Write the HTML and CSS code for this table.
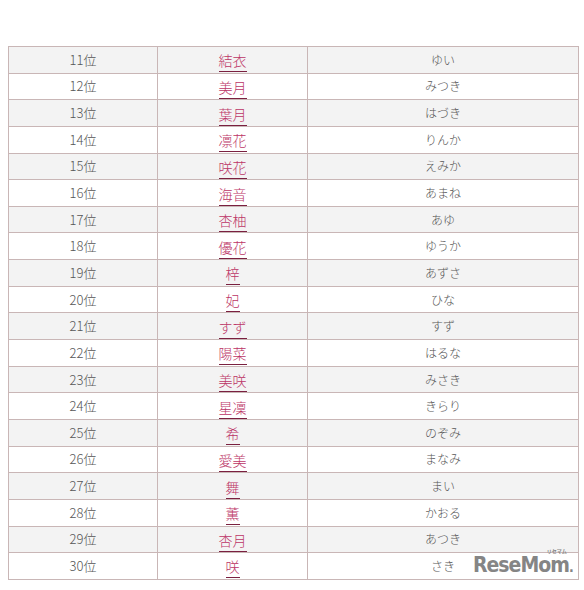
FILE: index.html
```html
<!DOCTYPE html>
<html lang="ja">
<head>
<meta charset="utf-8">
<link rel="stylesheet" href="styles.css">
</head>
<body>
<div class="wrap">
<table class="rank">
<colgroup><col class="c1"><col class="c2"><col class="c3"></colgroup>
<tbody>
<tr><td>11位</td><td><a>結衣</a></td><td>ゆい</td></tr>
<tr><td>12位</td><td><a>美月</a></td><td>みつき</td></tr>
<tr><td>13位</td><td><a>葉月</a></td><td>はづき</td></tr>
<tr><td>14位</td><td><a>凛花</a></td><td>りんか</td></tr>
<tr><td>15位</td><td><a>咲花</a></td><td>えみか</td></tr>
<tr><td>16位</td><td><a>海音</a></td><td>あまね</td></tr>
<tr><td>17位</td><td><a>杏柚</a></td><td>あゆ</td></tr>
<tr><td>18位</td><td><a>優花</a></td><td>ゆうか</td></tr>
<tr><td>19位</td><td><a>梓</a></td><td>あずさ</td></tr>
<tr><td>20位</td><td><a>妃</a></td><td>ひな</td></tr>
<tr><td>21位</td><td><a>すず</a></td><td>すず</td></tr>
<tr><td>22位</td><td><a>陽菜</a></td><td>はるな</td></tr>
<tr><td>23位</td><td><a>美咲</a></td><td>みさき</td></tr>
<tr><td>24位</td><td><a>星凜</a></td><td>きらり</td></tr>
<tr><td>25位</td><td><a>希</a></td><td>のぞみ</td></tr>
<tr><td>26位</td><td><a>愛美</a></td><td>まなみ</td></tr>
<tr><td>27位</td><td><a>舞</a></td><td>まい</td></tr>
<tr><td>28位</td><td><a>薫</a></td><td>かおる</td></tr>
<tr><td>29位</td><td><a>杏月</a></td><td>あつき</td></tr>
<tr><td>30位</td><td><a>咲</a></td><td>さき</td></tr>
</tbody>
</table>
<div class="logo"><span class="ruby">リセマム</span>ReseMom<span class="dot">.</span></div>
</div>
</body>
</html>
```
FILE: styles.css
```css
html, body { margin: 0; padding: 0; background: #fff; }
body { font-family: "Noto Sans CJK JP", "Noto Sans", sans-serif; color: #555; }
.wrap { position: relative; padding: 46px 7px 0 8px; }
.rank { width: 570px; border-collapse: collapse; table-layout: fixed; }
.c1 { width: 149px; }
.c2 { width: 150px; }
.c3 { width: 271px; }
.rank td {
  border: 1px solid #c9b6b6;
  height: 25.65px;
  padding: 0;
  text-align: center;
  font-size: 13px;
  font-weight: 300;
  line-height: 18px;
  vertical-align: middle;
}
.rank td:nth-child(3) { font-size: 12px; }
.rank tr:nth-child(odd) td { background: #f3f3f3; }
.rank tr:nth-child(even) td { background: #fff; }
.rank a {
  color: #bc3566;
  font-size: 14px;
  display: inline-block;
  line-height: 18px;
  padding-bottom: 2px;
  border-bottom: 1px solid #7a2040;
  position: relative;
  top: 2px;
}
.logo {
  position: absolute;
  left: 473px;
  top: 554px;
  font-family: "DejaVu Sans", sans-serif;
  font-stretch: condensed;
  font-weight: bold;
  font-size: 21px;
  letter-spacing: -1px;
  color: #858585;
  line-height: 22px;
}
.logo .ruby {
  position: absolute;
  right: 6px;
  top: -6px;
  font-size: 5px;
  letter-spacing: 0;
  font-stretch: normal;
  font-family: "Noto Sans CJK JP", sans-serif;
  line-height: 6px;
}
.logo .dot { font-size: 14px; }
```
